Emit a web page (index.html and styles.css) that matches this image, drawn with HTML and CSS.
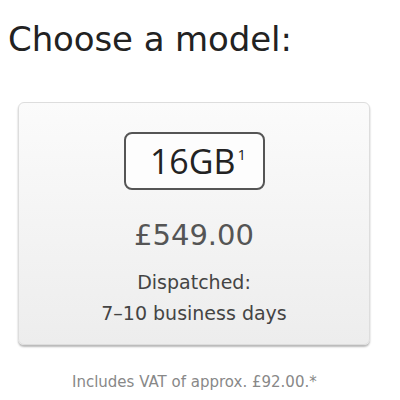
FILE: index.html
```html
<!DOCTYPE html>
<html>
<head>
<meta charset="utf-8">
<link rel="stylesheet" href="styles.css">
</head>
<body>
<div class="page">
  <h1 class="title">Choose a model:</h1>
  <div class="card">
    <div class="model"><span class="cap">16GB</span><sup class="note">1</sup></div>
    <div class="price">£549.00</div>
    <div class="ship">Dispatched:<br>7–10 business days</div>
  </div>
  <div class="vat">Includes VAT of approx. £92.00.*</div>
</div>
</body>
</html>
```
FILE: styles.css
```css
html, body { margin: 0; padding: 0; background: #fff; }
body { font-family: "DejaVu Sans", Verdana, sans-serif; }
.page { width: 400px; height: 400px; overflow: hidden; }
.title {
  margin: 0;
  padding: 18px 0 0 8px;
  font-size: 34px;
  font-weight: normal;
  color: #222;
  line-height: 42px;
  letter-spacing: -0.1px;
}
.card {
  margin: 42px 0 0 18px;
  width: 352px;
  height: 243px;
  box-sizing: border-box;
  border: 1px solid #ddd;
  border-radius: 6px;
  background: linear-gradient(#fbfbfb, #ededed);
  box-shadow: 0 2px 2px rgba(0,0,0,0.28);
  display: flex;
  flex-direction: column;
  align-items: center;
  padding-top: 29px;
}
.model {
  width: 141px;
  height: 58px;
  box-sizing: border-box;
  border: 2.5px solid #555;
  border-radius: 8px;
  display: flex;
  align-items: center;
  justify-content: center;
  font-family: "Open Sans", sans-serif;
  font-size: 34px;
  color: #222;
  background: #fdfdfd;
  padding-left: 8px;
}
.cap { line-height: 1; }
.note { font-size: 15px; align-self: flex-start; margin-top: 10px; margin-left: 2px; }
.price {
  margin-top: 28px;
  font-size: 29px;
  color: #555;
  line-height: 34px;
}
.ship {
  margin-top: 15px;
  font-size: 19px;
  color: #444;
  line-height: 31px;
  text-align: center;
}
.vat {
  margin-top: 28px;
  margin-left: 72px;
  font-size: 15px;
  color: #888;
}
```
